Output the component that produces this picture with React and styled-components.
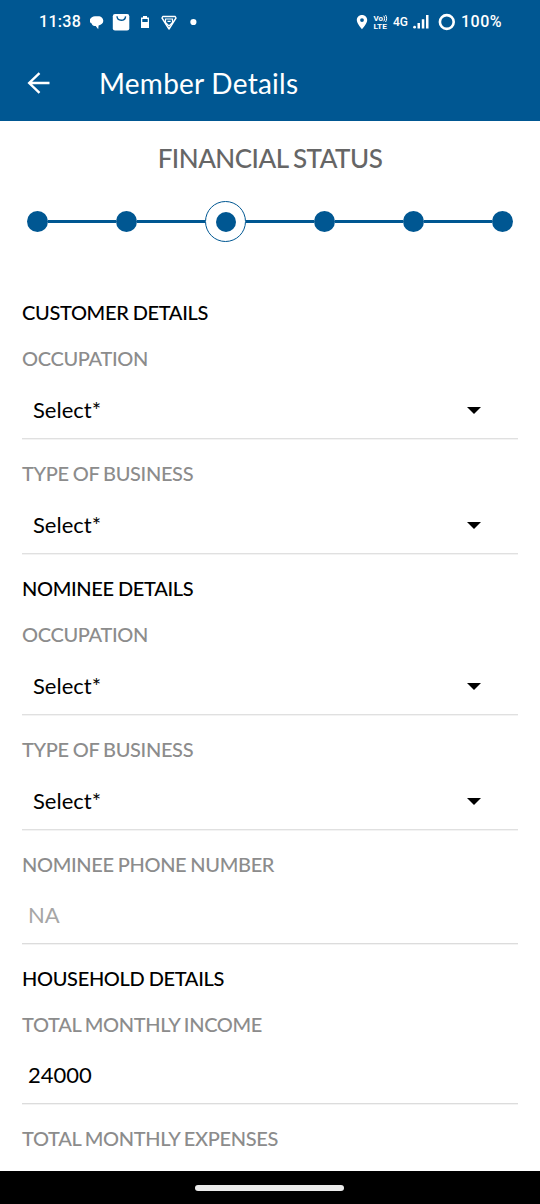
import React from 'react';
import styled, { createGlobalStyle } from 'styled-components';

const GlobalStyle = createGlobalStyle`
  * {
    box-sizing: border-box;
  }
  body {
    margin: 0;
    background: #fff;
    font-family: Lato, sans-serif;
  }
`;

const Screen = styled.div`
  display: flex;
  flex-direction: column;
  height: 1204px;
  overflow: hidden;
  background: #fff;
`;

const Header = styled.header`
  flex: none;
  height: 121px;
  background: #005792;
  color: #fff;
`;

const StatusBar = styled.div`
  display: flex;
  align-items: center;
  justify-content: space-between;
  height: 44px;
  padding: 0 38px 0 39px;
  font-family: Roboto, sans-serif;
  font-weight: 500;
  svg {
    display: block;
    flex: none;
  }
`;

const StatusGroup = styled.div`
  display: flex;
  align-items: center;
`;

const StatusText = styled.span`
  width: ${({ $width }) => $width}px;
  font-size: ${({ $size }) => $size || 16}px;
  font-weight: 500;
  letter-spacing: ${({ $spacing }) => $spacing || 0}px;
  line-height: 20px;
  white-space: nowrap;
`;

const TitleBar = styled.div`
  display: flex;
  align-items: center;
  height: 77px;
  padding-left: 27px;
`;

const BackButton = styled.button`
  width: 72px;
  padding: 0;
  border: 0;
  background: none;
  color: #fff;
  svg {
    display: block;
  }
`;

const PageTitle = styled.h1`
  margin: 0;
  font-size: 28px;
  font-weight: 400;
  line-height: 34px;
  letter-spacing: 0.25px;
`;

const Content = styled.main`
  flex: 1;
  min-height: 0;
  overflow: hidden;
`;

const StepTitle = styled.h2`
  margin: 20px 0 0;
  color: #666;
  font-size: 26px;
  font-weight: 500;
  line-height: 34px;
  letter-spacing: -0.5px;
  word-spacing: -0.9px;
  text-align: center;
`;

const Stepper = styled.div`
  display: flex;
  align-items: center;
  height: 41px;
  margin: 26px 27px 36px;
`;

const Dot = styled.span`
  width: ${({ $size }) => $size || 21}px;
  height: ${({ $size }) => $size || 21}px;
  border-radius: 50%;
  background: #005792;
`;

const Ring = styled.span`
  display: flex;
  align-items: center;
  justify-content: center;
  width: 41px;
  height: 41px;
  border: 1.5px solid #005792;
  border-radius: 50%;
`;

const StepLine = styled.span`
  flex: 1;
  height: 3px;
  background: #005792;
`;

const Form = styled.form`
  padding: 0 22px;
`;

const SectionTitle = styled.h3`
  margin: 0;
  padding-top: 23px;
  color: #000;
  font-size: 20px;
  font-weight: 500;
  line-height: 23px;
  letter-spacing: -0.33px;
  word-spacing: -0.5px;
`;

const FieldLabel = styled.div`
  padding-top: 23px;
  color: #8c8c8c;
  font-size: 20px;
  font-weight: 500;
  line-height: 23px;
  letter-spacing: -0.34px;
  word-spacing: -0.7px;
`;

const SelectBox = styled.div`
  display: flex;
  align-items: center;
  justify-content: space-between;
  height: 69px;
  padding: 11px 37px 0 11px;
  box-shadow: 0 0.5px 0 #e6e6e6;
  border-bottom: 1px solid #e0e0e0;
  color: #000;
  font-size: 22px;
`;

const InputBox = styled.div`
  display: flex;
  align-items: center;
  height: 68px;
  padding: 10px 6px 0;
  box-shadow: 0 0.5px 0 #e6e6e6;
  border-bottom: 1px solid #dcdcdc;
  color: ${({ $muted }) => ($muted ? '#a6a6a6' : '#000')};
  font-size: 22px;
`;

const NavBar = styled.footer`
  display: flex;
  flex: none;
  align-items: center;
  justify-content: center;
  height: 33px;
  padding-right: 1px;
  background: #000;
`;

const NavHandle = styled.span`
  width: 149px;
  height: 6px;
  border-radius: 3px;
  background: #ebebeb;
`;

const sections = [
  {
    title: 'CUSTOMER DETAILS',
    fields: [
      { label: 'OCCUPATION', type: 'select' },
      { label: 'TYPE OF BUSINESS', type: 'select' },
    ],
  },
  {
    title: 'NOMINEE DETAILS',
    fields: [
      { label: 'OCCUPATION', type: 'select' },
      { label: 'TYPE OF BUSINESS', type: 'select' },
      { label: 'NOMINEE PHONE NUMBER', type: 'input', value: 'NA', muted: true },
    ],
  },
  {
    title: 'HOUSEHOLD DETAILS',
    fields: [
      { label: 'TOTAL MONTHLY INCOME', type: 'input', value: '24000' },
      { label: 'TOTAL MONTHLY EXPENSES', type: 'input', value: '' },
    ],
  },
];

// chat bubble, shopping bag, battery, shield and the "more" dot
function NotificationIcons() {
  return (
    <svg width="110" height="20" viewBox="0 0 110 20">
      <path
        fill="#fff"
        d="M5 4.300C2 4.500-.3 6.500-.3 8.700c0 1.500 1 2.500 2 2.700.3 1.500 1.300 2.300 2.800 2.500h1.200l2.500 3.300.4-3.600c2.800-.7 4.700-2.400 4.700-4.800 0-2.900-2.800-5-6-4.500-.8-.1-1.500-.1-2.300 0z"
      />
      <rect x="22.800" y="2" width="16.500" height="16.500" rx="2.200" fill="#fff" />
      <path d="M27 4.300c.3 5.300 8 5.300 8.600 0" fill="none" stroke="#005792" strokeWidth="1.400" />
      <path d="M51 5.500h2V4h4v1.500h2V16h-8z" fill="#fff" />
      <path d="M52.300 7h5.400v3h-5.400z" fill="#005792" />
      <path
        d="M72.800 4.500h12.400l.8 1.500-7 11-7-11z"
        fill="none"
        stroke="#fff"
        strokeWidth="1.400"
        strokeLinejoin="round"
      />
      <path d="M75.500 7h7v3.500L79 14l-3.500-3.500zM77.500 9.300h3.200" fill="none" stroke="#fff" strokeWidth="1.200" />
      <circle cx="103.400" cy="10" r="3.100" fill="#fff" />
    </svg>
  );
}

function PinIcon() {
  return (
    <svg width="17" height="20" viewBox="0 0 17 20">
      <path
        fill="#fff"
        fillRule="evenodd"
        d="M6 3C3 3 .8 5.200.8 8.100c0 3.800 5.200 9.200 5.200 9.200s5.200-5.400 5.200-9.200C11.200 5.200 9 3 6 3zm0 3.200a1.900 1.900 0 1 1 0 3.800 1.900 1.900 0 0 1 0-3.800z"
      />
    </svg>
  );
}

function VolteIcon() {
  return (
    <svg width="20" height="20" viewBox="0 0 20 20" fill="#fff" fontFamily="Roboto, sans-serif" fontWeight="700">
      <text x="0.500" y="9" fontSize="8" textLength="9.500" lengthAdjust="spacingAndGlyphs">
        Vo
      </text>
      <path d="M10.700 3.800c1.200 1.500 1.200 4 0 5.500M12.500 3c1.500 1.800 1.500 5.200 0 7" fill="none" stroke="#fff" strokeWidth="1" />
      <text x="0.500" y="16.800" fontSize="8" textLength="13.500" lengthAdjust="spacingAndGlyphs">
        LTE
      </text>
    </svg>
  );
}

function SignalIcons() {
  return (
    <svg width="49" height="20" viewBox="0 0 49 20">
      <circle cx="2.600" cy="15.200" r="1.400" fill="#fff" />
      <path d="M5.500 11H8v5.500H5.500zM9.800 7.200h2.500v9.300H9.800zM14 3h2.500v13.500H14z" fill="#fff" />
      <circle cx="34.800" cy="10" r="6.900" fill="none" stroke="#fff" strokeWidth="2.600" />
    </svg>
  );
}

function BackArrow() {
  return (
    <svg width="24" height="24" viewBox="0 0 24 24">
      <path
        d="M12.500 2.200L2.200 12l10.300 9.800M2.200 12h20.300"
        fill="none"
        stroke="#fff"
        strokeWidth="2.400"
      />
    </svg>
  );
}

function Caret() {
  return (
    <svg width="14" height="8" viewBox="0 0 14 8">
      <path d="M0 1h14L7 8z" fill="#000" />
    </svg>
  );
}

function Field({ label, type, value, muted }) {
  return (
    <div>
      <FieldLabel>{label}</FieldLabel>
      {type === 'select' ? (
        <SelectBox>
          Select*
          <Caret />
        </SelectBox>
      ) : (
        <InputBox $muted={muted}>{value}</InputBox>
      )}
    </div>
  );
}

export default function App() {
  return (
    <>
      <GlobalStyle />
      <Screen>
        <Header>
          <StatusBar>
            <StatusGroup>
              <StatusText $width={51} $spacing={0.3}>
                11:38
              </StatusText>
              <NotificationIcons />
            </StatusGroup>
            <StatusGroup>
              <PinIcon />
              <VolteIcon />
              <StatusText $width={19} $size={12}>
                4G
              </StatusText>
              <SignalIcons />
              <StatusText $width={41} $spacing={0.5}>
                100%
              </StatusText>
            </StatusGroup>
          </StatusBar>
          <TitleBar>
            <BackButton aria-label="Back">
              <BackArrow />
            </BackButton>
            <PageTitle>Member Details</PageTitle>
          </TitleBar>
        </Header>
        <Content>
          <StepTitle>FINANCIAL STATUS</StepTitle>
          <Stepper>
            <Dot />
            <StepLine />
            <Dot />
            <StepLine />
            <Ring>
              <Dot $size={20} />
            </Ring>
            <StepLine />
            <Dot />
            <StepLine />
            <Dot />
            <StepLine />
            <Dot />
          </Stepper>
          <Form>
            {sections.map((section) => (
              <section key={section.title}>
                <SectionTitle>{section.title}</SectionTitle>
                {section.fields.map((field) => (
                  <Field key={field.label} {...field} />
                ))}
              </section>
            ))}
          </Form>
        </Content>
        <NavBar>
          <NavHandle />
        </NavBar>
      </Screen>
    </>
  );
}
